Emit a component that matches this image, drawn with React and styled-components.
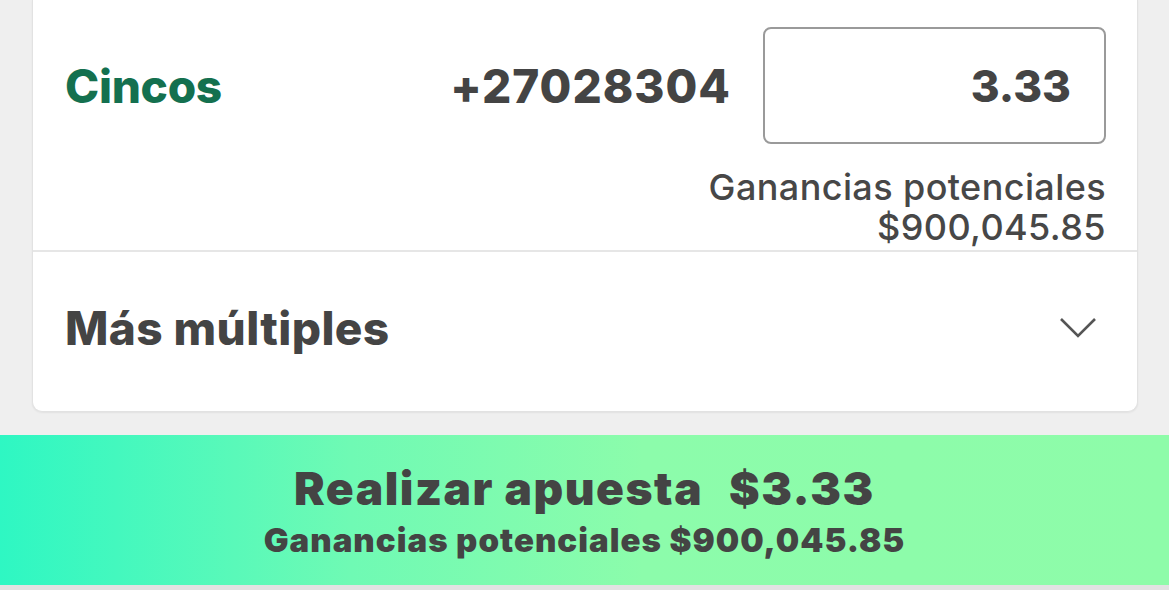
import React from 'react'
import styled, { createGlobalStyle } from 'styled-components'

const GlobalStyle = createGlobalStyle`
  html, body {
    margin: 0;
    padding: 0;
    background: #efefef;
    font-family: Inter, 'Noto Sans', sans-serif;
    color: #444;
  }
`

const Page = styled.div`
  width: 1169px;
  height: 590px;
  overflow: hidden;
  display: flex;
  flex-direction: column;
  background: #efefef;
`

const CardWrap = styled.div`
  padding: 0 31px 0 32px;
`

const Card = styled.div`
  background: #fff;
  border: 1px solid #e2e2e2;
  border-top: none;
  border-radius: 0 0 10px 10px;
  box-shadow: 0 1px 2px rgba(0, 0, 0, 0.06);
`

const BetSection = styled.div`
  padding: 27px 31px 3px 32px;
  border-bottom: 2px solid #e6e6e6;
`

const BetRow = styled.div`
  display: flex;
  align-items: center;
  gap: 32px;
`

const Selection = styled.div`
  flex: 1;
  font-size: 46px;
  font-weight: 800;
  color: #14704f;
  letter-spacing: -0.3px;
`

const Odds = styled.div`
  font-size: 46px;
  font-weight: 800;
  letter-spacing: 1px;
`

const StakeBox = styled.div`
  box-sizing: border-box;
  width: 343px;
  height: 117px;
  border: 2px solid #9a9a9a;
  border-radius: 8px;
  display: flex;
  align-items: center;
  justify-content: flex-end;
  padding-right: 33px;
  font-size: 44px;
  font-weight: 800;
`

const Winnings = styled.div`
  margin-top: 23px;
  text-align: right;
  font-size: 36px;
  line-height: 40px;
  font-weight: 500;
  letter-spacing: 0.4px;
  color: #474747;
`

const MoreRow = styled.div`
  box-sizing: border-box;
  height: 159px;
  padding: 0 40px 8px 32px;
  display: flex;
  align-items: center;
  justify-content: space-between;
`

const MoreTitle = styled.div`
  font-size: 46px;
  font-weight: 800;
  letter-spacing: 0.4px;
`

const PlaceBet = styled.div`
  margin-top: 23px;
  height: 150px;
  background: linear-gradient(90deg, #2ef7c3 0%, #6ffab4 30%, #8cfcab 55%, #8efca9 100%);
  display: flex;
  flex-direction: column;
  align-items: center;
  justify-content: center;
  gap: 6px;
  color: #444;
`

const PlaceTitle = styled.div`
  font-size: 46px;
  font-weight: 900;
  letter-spacing: 1.5px;
  line-height: 54px;

  span {
    margin-left: 26px;
  }
`

const PlaceSub = styled.div`
  font-size: 33px;
  font-weight: 900;
  letter-spacing: 1px;
  line-height: 38px;
`

const BottomEdge = styled.div`
  flex: 1;
  background: #e2e2e2;
`

const Chevron = () => (
  <svg width="38" height="24" viewBox="0 0 38 24">
    <path d="M2 3 L19 20 L36 3" fill="none" stroke="#555" strokeWidth="2.6" />
  </svg>
)

const App = () => (
  <>
    <GlobalStyle />
    <Page>
      <CardWrap>
        <Card>
          <BetSection>
            <BetRow>
              <Selection>Cincos</Selection>
              <Odds>+27028304</Odds>
              <StakeBox>3.33</StakeBox>
            </BetRow>
            <Winnings>
              Ganancias potenciales
              <br />
              $900,045.85
            </Winnings>
          </BetSection>
          <MoreRow>
            <MoreTitle>Más múltiples</MoreTitle>
            <Chevron />
          </MoreRow>
        </Card>
      </CardWrap>
      <PlaceBet>
        <PlaceTitle>
          Realizar apuesta<span>$3.33</span>
        </PlaceTitle>
        <PlaceSub>Ganancias potenciales $900,045.85</PlaceSub>
      </PlaceBet>
      <BottomEdge />
    </Page>
  </>
)

export default App
